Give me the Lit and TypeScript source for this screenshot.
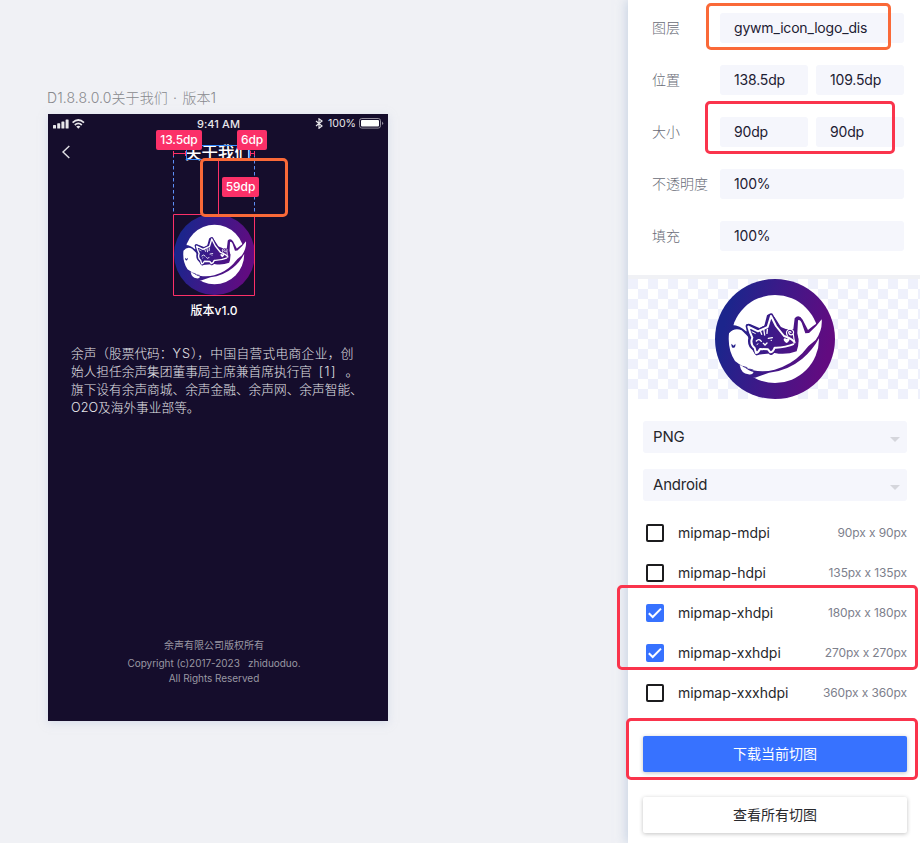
import { LitElement, html, css } from "lit";
import { customElement, property } from "lit/decorators.js";

@customElement("cat-logo")
class CatLogo extends LitElement {
  static styles = css`
    :host { display: block; }
    svg { display: block; width: 100%; height: 100%; }
  `;
  render() {
    return html`<svg viewBox="45 27 360 360">
      <defs>
        <linearGradient id="g" gradientUnits="userSpaceOnUse" x1="45" y1="150" x2="405" y2="240">
          <stop offset="0.08" stop-color="#1c258c" />
          <stop offset="0.5" stop-color="#401888" />
          <stop offset="0.95" stop-color="#620b80" />
        </linearGradient>
      </defs>
      <circle cx="225" cy="207" r="180" fill="url(#g)" />
      <circle cx="225" cy="207" r="132" fill="#fff" />
      <path d="M60 182 L96 165 Q120 166 138 184 L152 184 L137 168 Q138 160 150 162 L178 174 L193 167 L201 136 Q213 124 224 142 L247 178 L280 178 L284 145 Q296 131 308 149 L324 180 L338 169 L366 149 L390 150 L385 215 L357 205 Q337 242 307 266 Q262 303 207 308 L165 323 L120 318 Z" fill="url(#g)" />
      <path d="M87 190 Q103 171 125 181 Q140 195 151 208 L153 232 L163 250 L174 254 L224 249 Q257 256 290 244 Q300 218 292 190 L294 151 Q300 147 305 158 L316 190 L327 189 L348 169 L365 148 Q368 181 347 210 Q324 226 307 250 Q272 286 224 299 Q193 307 158 301 Q125 290 105 273 Q82 239 87 190Z" fill="#fff" />
      <path d="M119 285 L129 288 Q146 303 161 306 Q157 316 145 313 Q124 312 119 285Z" fill="#fff" />
      <path d="M128 289 L142 293 M148 297 L160 300" stroke="#34208a" stroke-width="2.5" />
      <path d="M94 221 Q94 236 103 233 Q108 227 106 221 L101 227Z" fill="url(#g)" />
      <path d="M144 169 L152 204 Q147 228 165 236 L171 249 L185 236 L207 237 L213 248 L227 236 L270 237 L287 215 L279 187 L260 186 L229 173 L213 137 L200 171 L175 185Z" fill="url(#g)" stroke="url(#g)" stroke-width="14" stroke-linejoin="round" />
      <path d="M145 170 Q150 189 157 203 Q149 222 164 234 L168 249 Q174 249 180 237 L204 238 L211 247 Q219 247 224 233 Q253 234 285 221 Q282 208 252 198 L228 168 L213 138 L203 171 L174 184Z" fill="url(#g)" stroke="#fff" stroke-width="6" stroke-linejoin="round" />
      <path d="M234 241 Q256 248 278 237 Q290 226 291 205" stroke="url(#g)" fill="none" stroke-width="9" />
      <path d="M180 180 L185 193 M191 177 L194 195 M202 178 L201 190 M169 213 Q177 204 184 214 M205 205 L217 203 M190 220 L195 225 L201 219" stroke="#fff" fill="none" stroke-width="4" stroke-linecap="round" />
      <path d="M167 191 L155 185 M170 224 L175 221 M212 211 L216 211" stroke="#fff" stroke-width="3" />
      <path d="M260 219 C244 209 253 200 260 207 C267 200 275 209 260 219Z" fill="#fff" />
      <path d="M262 197 C254 181 268 174 277 180 C287 188 275 200 268 192 C263 186 269 182 273 187 M280 193 Q281 207 285 218" stroke="#fff" fill="none" stroke-width="3.5" stroke-linecap="round" />
    </svg>`;
  }
}

@customElement("density-row")
class DensityRow extends LitElement {
  @property() label = "";
  @property() size = "";
  @property({ type: Boolean }) checked = false;
  static styles = css`
    :host { display: flex; height: 40px; align-items: center; padding: 0 0 0 3px; font-size: 14px; color: #26272b; }
    .box { box-sizing: border-box; width: 18px; height: 18px; border: 2px solid #1c1c1e; border-radius: 2px; margin-right: 14px; flex: none; }
    .on { background: #3772ff; border-color: #3772ff; }
    .on svg { display: block; width: 18px; height: 18px; margin: -2px; }
    .name { flex: 1; letter-spacing: -0.03px; padding-bottom: 1px; }
    .size { font-size: 12px; color: #7d808c; letter-spacing: -0.1px; padding-bottom: 1px; }
  `;
  render() {
    return html`<span class="box ${this.checked ? "on" : ""}">${this.checked
      ? html`<svg viewBox="0 0 18 18"><path d="M2.8 9.3 L6.7 13 L15 4.6" fill="none" stroke="#fff" stroke-width="2" /></svg>`
      : null}</span><span class="name">${this.label}</span><span class="size">${this.size}</span>`;
  }
}

@customElement("app-root")
class AppRoot extends LitElement {
  static styles = css`
    :host { display: flex; position: relative; width: 920px; height: 843px; overflow: hidden; background: #f0f1f5;
      font-family: Inter, "Noto Sans CJK SC", sans-serif; }
    * { box-sizing: border-box; }
    .canvas { width: 628px; padding: 88px 0 0 47px; }
    .title { height: 20px; line-height: 20px; font-size: 14px; color: #88898d; font-weight: 300; white-space: pre; letter-spacing: 0.1px; word-spacing: 1.2px; margin-bottom: 6px; }
    .phone { position: relative; width: 340px; height: 607px; margin-left: 1px; background: #150d2c; color: #fff; box-shadow: 0 2px 8px rgba(190,202,225,.5); display: flex; flex-direction: column; }
    .status { display: flex; height: 19px; align-items: center; padding: 0 4px 0 5px; justify-content: space-between; font-size: 11px; color: #e7e6ea; }
    .status > div { display: flex; align-items: center; width: 80px; }
    .status .clock { justify-content: center; font-weight: 500; letter-spacing: .1px; }
    .status .right { justify-content: flex-end; gap: 3px; }
    .pct { font-size: 10.6px; margin-left: 2px; }
    .nav { display: grid; grid-template-columns: 36px 1fr 36px; height: 40px; align-items: center; text-align: center; font-size: 16.5px; font-weight: 500; padding-bottom: 2px; }
    .nav svg { margin-left: 13px; }
    .logo { width: 81px; height: 81px; margin: 41px auto 0 126px; }
    .ver { text-align: center; font-size: 12px; font-weight: 500; line-height: 18px; margin: 6px 8px 0 0; letter-spacing: 0; padding-top: 1px; height: 18px; }
    .about { margin: 25.5px 0 0 23px; font-size: 12.7px; line-height: 18.2px; color: #e4e3e8; white-space: pre; font-weight: 300; }
    .about .ys { letter-spacing: 1px; }
    .about .wide { letter-spacing: 0.35px; }
    .about .ref { margin-left: 1.5px; letter-spacing: 1.5px; }
    .foot { margin-top: auto; padding: 0 8px 35px 0; text-align: center; font-size: 10px; line-height: 15px; color: #9997a2; white-space: pre; letter-spacing: -0.04px; }
    .foot div:first-child { margin-bottom: 3px; letter-spacing: 0; }
    .tag { position: absolute; height: 20px; line-height: 20px; border-radius: 2px; background: #fb3068; color: #fff; font-size: 12px; font-weight: 500; text-align: center; letter-spacing: -0.1px; }
    .t1 { left: 108px; top: 16px; width: 46px; }
    .t2 { left: 189px; top: 16px; width: 30px; }
    .t3 { left: 174px; top: 63px; width: 37px; }
    .measure { position: absolute; left: 0; top: 0; }
    .panel { width: 292px; background: #fff; box-shadow: -2px 0 10px rgba(175,193,216,.6); }
    .props { padding: 13px 16px 0 24px; height: 275px; display: flex; flex-direction: column; gap: 22px; }
    .prop { display: flex; height: 30px; gap: 8px; align-items: center; }
    .prop label { width: 60px; font-size: 14px; color: #696c77; font-weight: 300; white-space: nowrap; padding-bottom: 2px; }
    .field { flex: 1; height: 30px; line-height: 30px; padding-left: 14px; border-radius: 3px; background: #f5f6fc; font-size: 14px; color: #1d2033; white-space: nowrap; letter-spacing: -0.18px; }
    .preview { height: 124px; border-top: 4px solid #f0f1f5; display: flex; justify-content: center; padding-left: 2px;
      background: conic-gradient(#eff1fc 25%, #fff 0 50%, #eff1fc 0 75%, #fff 0) 10px 0 / 20px 20px; }
    .preview cat-logo { width: 120px; height: 120px; }
    .export { padding: 22px 13px 0 15px; }
    .select { display: flex; justify-content: space-between; align-items: center; height: 32px; margin-bottom: 16px; padding: 0 7px 0 10px; background: #f5f6fc; border-radius: 3px; font-size: 15px; color: #26272b; letter-spacing: -0.2px; }
    .select span { padding-bottom: 2px; }
    .arrow { border: 5px solid transparent; border-top-color: #d5d6dc; border-bottom: 0; margin-top: 5px; }
    .list { margin-top: -4px; }
    .btn { display: block; height: 36px; line-height: 36px; text-align: center; font-size: 14px; border-radius: 2px; color: #28292d; background: #fff; box-shadow: 0 1px 4px rgba(0,0,0,.24); }
    .primary { background: #3772ff; color: #fff; margin: 23px 0 25px; }
    .mark { position: absolute; border: 3px solid #fa344c; border-radius: 5px; }
    .orange { border-color: #fa6938; }
    .m1 { left: 706px; top: 3px; width: 185px; height: 47px; }
    .m2 { left: 705px; top: 101px; width: 190px; height: 53px; }
    .m3 { left: 617px; top: 585px; width: 301px; height: 85px; }
    .m4 { left: 626px; top: 718px; width: 292px; height: 62px; }
    .m5 { left: 200px; top: 157.5px; width: 88px; height: 59px; }
  `;
  private prop(label: string, values: string[]) {
    return html`<div class="prop"><label>${label}</label>${values.map((v) => html`<span class="field">${v}</span>`)}</div>`;
  }
  render() {
    const rows: [string, string, boolean][] = [
      ["mipmap-mdpi", "90px x 90px", false],
      ["mipmap-hdpi", "135px x 135px", false],
      ["mipmap-xhdpi", "180px x 180px", true],
      ["mipmap-xxhdpi", "270px x 270px", true],
      ["mipmap-xxxhdpi", "360px x 360px", false],
    ];
    return html`
      <section class="canvas">
        <div class="title">D1.8.8.0.0关于我们 · 版本1</div>
        <div class="phone">
          <div class="status">
            <div>
              <svg width="34" height="12" viewBox="0 0 34 12" fill="#e7e6ea">
                <rect x="0" y="7" width="3" height="3.5" rx=".6" /><rect x="4.2" y="5.3" width="3" height="5.2" rx=".6" /><rect x="8.4" y="3.4" width="3" height="7.1" rx=".6" /><rect x="12.6" y="1.5" width="3" height="9" rx=".6" />
                <g fill="none" stroke="#e7e6ea" stroke-width="1.7"><path d="M19.6 4.6 Q25.3 -.6 31 4.6" /><path d="M21.8 7 Q25.3 3.9 28.8 7" /></g><path d="M23.2 8.5 Q25.3 6.8 27.4 8.5 L25.3 10.7Z" />
              </svg>
            </div>
            <div class="clock">9:41 AM</div>
            <div class="right">
              <svg width="8" height="11" viewBox="0 0 8 11"><path d="M1 3 L7 8 L4 10.3 V.8 L7 3 L1 8" fill="none" stroke="#e7e6ea" stroke-width="1.2" /></svg>
              <span class="pct">100%</span>
              <svg width="25" height="11" viewBox="0 0 25 11"><rect x=".5" y=".5" width="21" height="9.6" rx="2.3" fill="none" stroke="#918d9c" /><rect x="2" y="2" width="18" height="6.6" rx="1" fill="#fff" /><path d="M23 3.5 Q25.3 5.3 23 7.1Z" fill="#918d9c" /></svg>
            </div>
          </div>
          <div class="nav">
            <svg width="10" height="14" viewBox="0 0 10 14"><path d="M8.3 1 L2 7 L8.3 13" fill="none" stroke="#e2e1e6" stroke-width="1.4" /></svg>
            <span>关于我们</span>
          </div>
          <cat-logo class="logo"></cat-logo>
          <div class="ver">版本v1.0</div>
          <div class="about"><div>余声（股票代码：<span class="ys">YS</span>）<span class="wide">，中国自营式电商企业，创</span></div><div>始人担任余声集团董事局主席兼首席执行官<span class="ref"> [1] </span> 。</div><div>旗下设有余声商城、余声金融、余声网、余声智能、</div><div>O2O及海外事业部等。</div></div>
          <div class="foot"><div>余声有限公司版权所有</div><div>Copyright (c)2017-2023   zhiduoduo.</div><div>All Rights Reserved</div></div>
          <svg class="measure" width="340" height="190" fill="none">
            <rect x="138.5" y="31.5" width="63" height="14" stroke="#3489ff" />
            <path d="M125.5 40 V100 M206.5 40 V100" stroke="#5d8ef7" stroke-dasharray="3.5 2.5" />
            <path d="M125.5 37 V42 M125.5 39.5 H138 M137.5 37 V42 M202.5 37 V42 M203 39.5 H206 M206.5 37 V42 M170.5 46 V100 M125.5 100.5 H206.5 V181.5 H125.5 Z" stroke="#fb3068" />
          </svg>
          <span class="tag t1">13.5dp</span><span class="tag t2">6dp</span><span class="tag t3">59dp</span>
        </div>
      </section>
      <aside class="panel">
        <div class="props">
          ${this.prop("图层", ["gywm_icon_logo_dis"])}
          ${this.prop("位置", ["138.5dp", "109.5dp"])}
          ${this.prop("大小", ["90dp", "90dp"])}
          ${this.prop("不透明度", ["100%"])}
          ${this.prop("填充", ["100%"])}
        </div>
        <div class="preview"><cat-logo></cat-logo></div>
        <div class="export">
          <div class="select"><span>PNG</span><i class="arrow"></i></div>
          <div class="select"><span>Android</span><i class="arrow"></i></div>
          <div class="list">${rows.map(([l, s, c]) => html`<density-row .label=${l} .size=${s} .checked=${c}></density-row>`)}</div>
          <div class="btn primary">下载当前切图</div>
          <div class="btn">查看所有切图</div>
        </div>
      </aside>
      <i class="mark orange m1"></i><i class="mark m2"></i><i class="mark m3"></i><i class="mark m4"></i><i class="mark orange m5"></i>
    `;
  }
}
